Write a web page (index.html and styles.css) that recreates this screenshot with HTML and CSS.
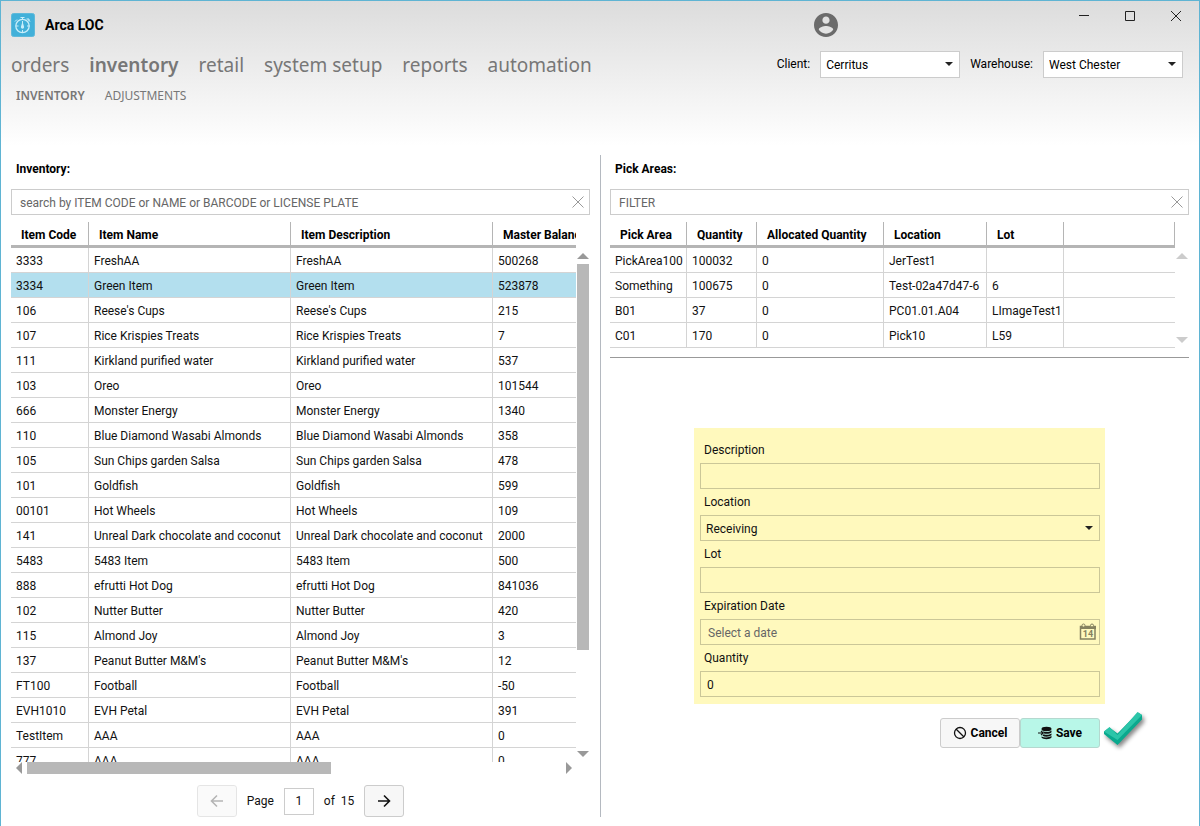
FILE: index.html
```
<!DOCTYPE html>
<html lang="en">

<head>
    <meta charset="UTF-8">
    <meta name="viewport" content="width=device-width, initial-scale=1.0">
    <title>Arca LOC</title>
    <link rel="stylesheet" href="styles.css">
</head>

<body>
    <header>
        <div class="title-bar">
            <svg class="logo" viewBox="0 0 24 24" width="24" height="24">
                <rect x="0.5" y="0.5" width="23" height="23" rx="2" fill="#42b0d9" stroke="#5fb9da" />
                <g fill="none" stroke="#c8eefa" stroke-width="1">
                    <circle cx="11.5" cy="13" r="6.7" stroke-width="1.3" />
                    <path d="M9.5 4.5h4M11.5 4.5v2M6 6.5l-2 2M17 6.5l2 2M15.5 6h2.5v2.500" />
                    <path d="M11.5 8v2M11.5 17v2M5 13h2.500M16 13h2.500" />
                </g>
                <path d="M11.500 8.500l1.500 5a1.600 1.600 0 1 1-3 0z" fill="#c8eefa" />
            </svg>
            <h1>Arca LOC</h1>
            <svg class="user" viewBox="2 2 20 20" width="24" height="24">
                <path fill="#6b6b6b" d="M12 2C6.480 2 2 6.480 2 12s4.480 10 10 10 10-4.480 10-10S17.520 2 12 2zm0 3c1.660 0 3 1.340 3 3s-1.340 3-3 3-3-1.340-3-3 1.340-3 3-3zm0 14.200c-2.500 0-4.710-1.280-6-3.220.030-1.990 4-3.080 6-3.080 1.990 0 5.970 1.090 6 3.080-1.290 1.940-3.500 3.220-6 3.220z" />
            </svg>
            <div class="window-btns">
                <button type="button" aria-label="Minimize"><svg width="12" height="12"><path d="M1 5.500h10" /></svg></button>
                <button type="button" aria-label="Maximize"><svg width="12" height="12"><path d="M1.500 1.500h9v9h-9z" /></svg></button>
                <button type="button" aria-label="Close"><svg width="12" height="12"><path d="M1 1l10 10M11 1L1 11" /></svg></button>
            </div>
        </div>
        <div class="nav-row">
            <nav class="main-nav">
                <a href="#">orders</a>
                <a href="#" class="active">inventory</a>
                <a href="#">retail</a>
                <a href="#">system setup</a>
                <a href="#">reports</a>
                <a href="#">automation</a>
            </nav>
            <div class="pickers">
                <label for="client">Client:</label>
                <div class="select-wrap">
                    <select id="client">
                        <option>Cerritus</option>
                    </select>
                </div>
                <label for="warehouse">Warehouse:</label>
                <div class="select-wrap">
                    <select id="warehouse">
                        <option>West Chester</option>
                    </select>
                </div>
            </div>
        </div>
        <nav class="sub-nav">
            <a href="#" class="active">INVENTORY</a>
            <a href="#">ADJUSTMENTS</a>
        </nav>
    </header>

    <main>
        <section class="inventory">
            <h2><label for="search">Inventory:</label></h2>
            <div class="search-box">
                <input type="text" id="search" placeholder="search by ITEM CODE or NAME or BARCODE or LICENSE PLATE">
                <button type="button" aria-label="Clear"><svg width="12" height="12"><path d="M0.500 0.500l11 11M11.500 0.500l-11 11" /></svg></button>
            </div>
            <div class="grid-box">
                <div class="table-wrap">
                    <table class="items">
                        <colgroup>
                            <col class="code">
                            <col class="name">
                            <col class="name">
                            <col class="balance">
                        </colgroup>
                        <thead>
                            <tr><th>Item Code</th><th>Item Name</th><th>Item Description</th><th>Master Balance</th></tr>
                        </thead>
                        <tbody>
                            <tr><td>3333</td><td>FreshAA</td><td>FreshAA</td><td>500268</td></tr>
                            <tr class="selected"><td>3334</td><td>Green Item</td><td>Green Item</td><td>523878</td></tr>
                            <tr><td>106</td><td>Reese's Cups</td><td>Reese's Cups</td><td>215</td></tr>
                            <tr><td>107</td><td>Rice Krispies Treats</td><td>Rice Krispies Treats</td><td>7</td></tr>
                            <tr><td>111</td><td>Kirkland purified water</td><td>Kirkland purified water</td><td>537</td></tr>
                            <tr><td>103</td><td>Oreo</td><td>Oreo</td><td>101544</td></tr>
                            <tr><td>666</td><td>Monster Energy</td><td>Monster Energy</td><td>1340</td></tr>
                            <tr><td>110</td><td>Blue Diamond Wasabi Almonds</td><td>Blue Diamond Wasabi Almonds</td><td>358</td></tr>
                            <tr><td>105</td><td>Sun Chips garden Salsa</td><td>Sun Chips garden Salsa</td><td>478</td></tr>
                            <tr><td>101</td><td>Goldfish</td><td>Goldfish</td><td>599</td></tr>
                            <tr><td>00101</td><td>Hot Wheels</td><td>Hot Wheels</td><td>109</td></tr>
                            <tr><td>141</td><td>Unreal Dark chocolate and coconut</td><td>Unreal Dark chocolate and coconut</td><td>2000</td></tr>
                            <tr><td>5483</td><td>5483 Item</td><td>5483 Item</td><td>500</td></tr>
                            <tr><td>888</td><td>efrutti Hot Dog</td><td>efrutti Hot Dog</td><td>841036</td></tr>
                            <tr><td>102</td><td>Nutter Butter</td><td>Nutter Butter</td><td>420</td></tr>
                            <tr><td>115</td><td>Almond Joy</td><td>Almond Joy</td><td>3</td></tr>
                            <tr><td>137</td><td>Peanut Butter M&amp;M's</td><td>Peanut Butter M&amp;M's</td><td>12</td></tr>
                            <tr><td>FT100</td><td>Football</td><td>Football</td><td>-50</td></tr>
                            <tr><td>EVH1010</td><td>EVH Petal</td><td>EVH Petal</td><td>391</td></tr>
                            <tr><td>TestItem</td><td>AAA</td><td>AAA</td><td>0</td></tr>
                            <tr><td>777</td><td>AAA</td><td>AAA</td><td>0</td></tr>
                        </tbody>
                    </table>
                </div>
                <div class="v-scroll">
                    <span class="arrow up"></span>
                    <div class="track"><div class="thumb"></div></div>
                    <span class="arrow down"></span>
                </div>
            </div>
            <div class="h-scroll">
                <span class="arrow left"></span>
                <div class="track"><div class="thumb"></div></div>
                <span class="arrow right"></span>
            </div>
            <div class="pager">
                <button type="button" aria-label="Previous page" disabled><svg width="14" height="14"><path d="M13 7H2M7 1.500L1.500 7 7 12.500" /></svg></button>
                <label for="page">Page</label>
                <input type="text" id="page" value="1">
                <span>of&nbsp; 15</span>
                <button type="button" aria-label="Next page"><svg width="14" height="14"><path d="M1 7h11M7 1.500L12.500 7 7 12.500" /></svg></button>
            </div>
        </section>

        <section class="pick-areas">
            <h2><label for="filter">Pick Areas:</label></h2>
            <div class="search-box">
                <input type="text" id="filter" placeholder="FILTER">
                <button type="button" aria-label="Clear"><svg width="12" height="12"><path d="M0.500 0.500l11 11M11.500 0.500l-11 11" /></svg></button>
            </div>
            <div class="grid-box">
                <div class="table-wrap">
                    <table class="areas">
                        <colgroup>
                            <col class="area">
                            <col class="qty">
                            <col class="allocated">
                            <col class="location">
                            <col class="lot">
                            <col>
                        </colgroup>
                        <thead>
                            <tr><th>Pick Area</th><th>Quantity</th><th>Allocated Quantity</th><th>Location</th><th>Lot</th><th></th></tr>
                        </thead>
                        <tbody>
                            <tr><td>PickArea100</td><td>100032</td><td>0</td><td>JerTest1</td><td></td><td></td></tr>
                            <tr><td>Something</td><td>100675</td><td>0</td><td>Test-02a47d47-6</td><td>6</td><td></td></tr>
                            <tr><td>B01</td><td>37</td><td>0</td><td>PC01.01.A04</td><td>LImageTest1</td><td></td></tr>
                            <tr><td>C01</td><td>170</td><td>0</td><td>Pick10</td><td>L59</td><td></td></tr>
                        </tbody>
                    </table>
                </div>
                <div class="v-scroll idle">
                    <span class="arrow up"></span>
                    <div class="track"></div>
                    <span class="arrow down"></span>
                </div>
            </div>

            <form class="area-form">
                <div class="fields">
                    <label for="description">Description</label>
                    <input type="text" id="description">
                    <label for="location">Location</label>
                    <div class="select-wrap">
                        <select id="location">
                            <option>Receiving</option>
                        </select>
                    </div>
                    <label for="lot">Lot</label>
                    <input type="text" id="lot">
                    <label for="expiration">Expiration Date</label>
                    <div class="date-wrap">
                        <input type="text" id="expiration" placeholder="Select a date">
                        <button type="button" aria-label="Open calendar">
                            <svg width="18" height="18" viewBox="0 0 18 18">
                                <path d="M1.500 3.500h14.500v12.500H1.500z" fill="none" stroke="#85815f" stroke-width="1.500" />
                                <path d="M1 3h16v3H1z" fill="#85815f" />
                                <circle cx="4.500" cy="2.500" r="1.500" fill="#fff9bd" stroke="#85815f" />
                                <circle cx="13" cy="2.500" r="1.500" fill="#fff9bd" stroke="#85815f" />
                                <text x="9" y="14" text-anchor="middle">14</text>
                            </svg>
                        </button>
                    </div>
                    <label for="quantity">Quantity</label>
                    <input type="text" id="quantity" value="0">
                </div>
                <div class="actions">
                    <button type="button" class="cancel">
                        <svg width="14" height="14"><g fill="none" stroke="#111" stroke-width="1.300"><circle cx="7" cy="7" r="5.500" /><path d="M3 3l8 8" /></g></svg>
                        Cancel
                    </button>
                    <button type="submit" class="save">
                        <svg width="14" height="14" viewBox="0 0 14 14">
                            <g fill="#111">
                                <ellipse cx="8.500" cy="3" rx="5" ry="2.200" />
                                <path d="M5 5.200c2 1.200 6 1 8.500-.8v1.800c-1.500 1.800-5 2-7.500 1.300z" />
                                <path d="M5.500 8.300c3 .9 6 .6 8-.8v1.800c-2 1.700-6.500 1.900-9 .5z" />
                                <path d="M3.500 10.600c3 1.300 7.500 1.100 10-.5v1.400c-1.500 2.300-8.500 2.300-10 0z" />
                            </g>
                            <path d="M0 7h5M3 4.800L5.200 7 3 9.200" fill="none" stroke="#111" stroke-width="1.200" />
                        </svg>
                        Save
                    </button>
                    <svg class="check" width="44" height="44" viewBox="0 0 44 44">
                        <path d="M2 20.500l5.500-4 8 6L36 1.500l4 2.500v4.500L15.500 34 2 23z" fill="#0aa98e" />
                        <path d="M2 20.500l5.500-4.500 8 8L35.500 1l4.500 3-24.500 25z" fill="#2cc5a9" />
                    </svg>
                </div>
            </form>
        </section>
    </main>
</body>

</html>
```
FILE: styles.css
```
* {
    padding: 0;
    margin: 0;
    box-sizing: border-box;
}

body {
    display: flex;
    flex-direction: column;
    height: 100vh;
    min-height: 700px;
    border: 1px solid #5fb4d3;
    border-bottom: none;
    background: #fff linear-gradient(#dcdcdc, #fff 146px) no-repeat;
    color: #111;
    font-family: Roboto, "Noto Sans", sans-serif;
    font-size: 12px;
    line-height: 16px;
}

input,
select,
button {
    font: inherit;
    color: inherit;
    outline: none;
}

button {
    cursor: pointer;
}

a {
    color: #777;
    text-decoration: none;
}

a.active {
    font-weight: bold;
}

/* header */
.title-bar {
    display: flex;
    align-items: center;
    height: 48px;
    padding: 0 8px 0 10px;
}

.title-bar h1 {
    flex: 1;
    margin-left: 10px;
    font-size: 14px;
    color: #000;
}

.window-btns {
    display: flex;
    gap: 16px;
    align-self: flex-start;
    margin-left: 231px;
}

.window-btns button {
    width: 30px;
    height: 30px;
    border: none;
    background: none;
}

.window-btns svg {
    display: block;
    margin: auto;
    fill: none;
    stroke: #222;
}

.nav-row {
    display: flex;
    justify-content: space-between;
    align-items: center;
    height: 30px;
    padding: 0 16px 0 10px;
}

.main-nav {
    display: flex;
    gap: 20px;
    padding-top: 2px;
    font-family: "Noto Sans", sans-serif;
    font-size: 19px;
    line-height: 30px;
}

.main-nav .active {
    font-weight: 600;
}

.pickers {
    display: flex;
    align-items: center;
    gap: 10px;
    color: #000;
}

.select-wrap {
    position: relative;
}

.select-wrap select {
    display: block;
    width: 140px;
    height: 27px;
    padding: 1px 0 0 5px;
    border: 1px solid #ccc;
    border-radius: 0;
    background: #fff;
    appearance: none;
}

.select-wrap::after {
    content: "";
    position: absolute;
    top: 11px;
    right: 7px;
    border: 4px solid transparent;
    border-top-color: #222;
    border-bottom: none;
    pointer-events: none;
}

.sub-nav {
    display: flex;
    gap: 20px;
    padding: 9px 15px;
    font-family: "Noto Sans", sans-serif;
}

.sub-nav .active {
    font-weight: 600;
}

/* panels */
main {
    flex: 1;
    display: grid;
    grid-template-columns: 1fr 1fr;
    grid-template-rows: minmax(0, 1fr);
    min-height: 0;
    padding: 42px 10px 9px;
}

section {
    display: flex;
    flex-direction: column;
    min-width: 0;
}

.inventory {
    padding-right: 10px;
}

.pick-areas {
    padding-left: 9px;
    border-left: 1px solid #b4b9c0;
}

h2 {
    padding: 6px 5px 4px;
    margin-bottom: 8px;
    font-size: 12px;
    color: #000;
}

.search-box {
    display: flex;
    flex: none;
    height: 26px;
    margin-bottom: 7px;
    border: 1px solid #ccc;
    background: #fff;
}

.search-box input {
    flex: 1;
    padding: 1px 8px 0;
    border: none;
    background: none;
}

.search-box button {
    width: 22px;
    border: none;
    background: none;
}

.search-box svg {
    display: block;
    margin: auto;
    fill: none;
    stroke: #999;
}

::placeholder {
    color: #666;
    opacity: 1;
}

/* tables */
.grid-box {
    display: flex;
    min-height: 0;
}

.inventory .grid-box {
    flex: 1;
}

.table-wrap {
    flex: 1;
    overflow: hidden;
}

table {
    width: 100%;
    table-layout: fixed;
    border-collapse: separate;
    border-spacing: 0;
}

.items {
    width: 620px;
}

.code { width: 78px; }
.name { width: 202px; }
.area { width: 77px; }
.qty { width: 70px; }
.allocated { width: 127px; }
.location { width: 103px; }
.lot { width: 77px; }

th,
td {
    height: 25px;
    padding: 2px 0 0 5px;
    border-right: 1px solid #d4d4d4;
    border-bottom: 1px solid #d4d4d4;
    text-align: left;
    white-space: nowrap;
}

th {
    height: 26px;
    padding-left: 10px;
    border-right-color: #b5b5b5;
    border-bottom: 3px solid #b5b5b5;
    color: #000;
}

td:last-child {
    border-right: none;
}

.selected td {
    background-color: #b3dfee;
}

/* scrollbars */
.v-scroll {
    display: flex;
    flex-direction: column;
    align-items: center;
    width: 14px;
    padding: 31px 0 5px;
}

.v-scroll .track {
    flex: 1;
    width: 12px;
    padding: 5px 0;
}

.v-scroll .thumb {
    height: 80%;
    background-color: #b8b8b8;
}

.h-scroll {
    display: flex;
    align-items: center;
    height: 12px;
    padding: 0 18px 0 5px;
}

.h-scroll .track {
    flex: 1;
    padding: 0 5px;
}

.h-scroll .thumb {
    width: 57%;
    height: 12px;
    background-color: #b8b8b8;
}

.arrow {
    border: 6px solid transparent;
}

.arrow.up {
    border-top: none;
    border-bottom-color: #999;
}

.arrow.down {
    border-bottom: none;
    border-top-color: #999;
}

.arrow.left {
    border-left: none;
    border-right-color: #999;
}

.arrow.right {
    border-right: none;
    border-left-color: #999;
}

.idle .arrow.up {
    border-bottom-color: #ccc;
}

.idle .arrow.down {
    border-top-color: #ccc;
}

.pick-areas .grid-box {
    padding-bottom: 9px;
    border-bottom: 1px solid #999;
}

/* pager */
.pager {
    display: flex;
    justify-content: center;
    align-items: center;
    gap: 10px;
    margin-top: 11px;
}

.pager button {
    width: 40px;
    height: 32px;
    border: 1px solid #ccc;
    border-radius: 3px;
    background-color: #f7f7f7;
}

.pager button:disabled {
    opacity: 0.5;
}

.pager button:disabled svg {
    opacity: 0.6;
}

.pager svg {
    display: block;
    margin: auto;
    fill: none;
    stroke: #111;
    stroke-width: 1.6;
}

.pager input {
    width: 30px;
    height: 27px;
    border: 1px solid #ccc;
    text-align: center;
}

/* pick area form */
.area-form {
    width: 411px;
    max-width: 100%;
    margin: 70px auto 0;
}

.fields {
    display: flex;
    flex-direction: column;
    padding: 9px 5px 7px 6px;
    background-color: #fff9bd;
}

.fields label {
    padding: 5px 4px;
}

.fields input,
.fields select {
    width: 100%;
    height: 26px;
    padding: 2px 6px 0;
    border: 1px solid #cbc798;
    background: none;
}

.fields select {
    padding-left: 5px;
}

.date-wrap {
    position: relative;
}

.date-wrap input {
    display: block;
    padding-left: 7px;
}

.date-wrap button {
    position: absolute;
    top: 4px;
    right: 3px;
    width: 18px;
    height: 18px;
    border: none;
    background: none;
}

.date-wrap svg {
    display: block;
}

.date-wrap text {
    fill: #85815f;
    font-size: 9px;
    font-weight: bold;
}

.actions {
    display: flex;
    justify-content: flex-end;
    align-items: center;
    height: 44px;
    margin: 7px -41px 0 0;
}

.actions button {
    display: flex;
    align-items: center;
    justify-content: center;
    gap: 4px;
    width: 80px;
    height: 30px;
    border: 1px solid #ccc;
    border-radius: 3px;
    background-color: #f7f7f7;
    color: #000;
    font-weight: bold;
}

.actions .save {
    border-color: #b5d8cf;
    background-color: #b8f7e8;
}

.check {
    margin-left: 2px;
    filter: drop-shadow(2px 3px 2px #888);
}
```
